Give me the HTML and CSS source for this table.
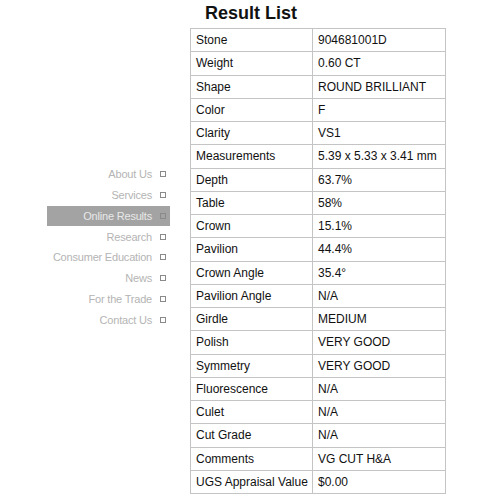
FILE: index.html
```html
<!DOCTYPE html>
<html>
<head>
<meta charset="utf-8">
<link rel="stylesheet" href="styles.css">
</head>
<body>
<div class="page">
  <nav class="side">
    <ul class="menu">
      <li class="item"><span>About Us</span><i class="box"></i></li>
      <li class="item"><span>Services</span><i class="box"></i></li>
      <li class="item active"><span>Online Results</span><i class="box"></i></li>
      <li class="item"><span>Research</span><i class="box"></i></li>
      <li class="item"><span>Consumer Education</span><i class="box"></i></li>
      <li class="item"><span>News</span><i class="box"></i></li>
      <li class="item"><span>For the Trade</span><i class="box"></i></li>
      <li class="item"><span>Contact Us</span><i class="box"></i></li>
    </ul>
  </nav>
  <main class="main">
    <h1 class="title">Result List</h1>
    <table class="results">
      <tr><td>Stone</td><td>904681001D</td></tr>
      <tr><td>Weight</td><td>0.60 CT</td></tr>
      <tr><td>Shape</td><td>ROUND BRILLIANT</td></tr>
      <tr><td>Color</td><td>F</td></tr>
      <tr><td>Clarity</td><td>VS1</td></tr>
      <tr><td>Measurements</td><td>5.39 x 5.33 x 3.41 mm</td></tr>
      <tr><td>Depth</td><td>63.7%</td></tr>
      <tr><td>Table</td><td>58%</td></tr>
      <tr><td>Crown</td><td>15.1%</td></tr>
      <tr><td>Pavilion</td><td>44.4%</td></tr>
      <tr><td>Crown Angle</td><td>35.4°</td></tr>
      <tr><td>Pavilion Angle</td><td>N/A</td></tr>
      <tr><td>Girdle</td><td>MEDIUM</td></tr>
      <tr><td>Polish</td><td>VERY GOOD</td></tr>
      <tr><td>Symmetry</td><td>VERY GOOD</td></tr>
      <tr><td>Fluorescence</td><td>N/A</td></tr>
      <tr><td>Culet</td><td>N/A</td></tr>
      <tr><td>Cut Grade</td><td>N/A</td></tr>
      <tr><td>Comments</td><td>VG CUT H&amp;A</td></tr>
      <tr><td>UGS Appraisal Value</td><td>$0.00</td></tr>
    </table>
  </main>
</div>
</body>
</html>
```
FILE: styles.css
```css
html, body {
  margin: 0;
  padding: 0;
  background: #fff;
}
.page {
  display: flex;
  align-items: flex-start;
  font-family: "Liberation Sans", Arial, sans-serif;
}
.side {
  width: 143px;
  padding-left: 47px;
  padding-top: 164px;
}
.menu {
  list-style: none;
  margin: 0;
  padding: 0;
  width: 123px;
}
.item {
  display: flex;
  justify-content: flex-end;
  align-items: center;
  gap: 8px;
  height: 20.75px;
  padding-right: 4px;
  font-size: 11px;
  color: #b4b4b4;
  letter-spacing: -0.2px;
}
.item.active {
  background: #a3a3a3;
  color: #e8e8e8;
}
.box {
  display: block;
  width: 4px;
  height: 4px;
  border: 1px solid #8a8a8a;
}
.main {
  display: flex;
  flex-direction: column;
}
.title {
  margin: 2px 0 4px 15px;
  font-size: 18px;
  line-height: 22px;
  font-weight: bold;
  color: #111;
}
.results {
  border-collapse: collapse;
  font-size: 12px;
  color: #111;
}
.results td {
  border: 1px solid #c4c4c4;
  height: 23.25px;
  padding: 0 4px 0 5px;
  vertical-align: middle;
  box-sizing: border-box;
}
.results td:first-child {
  width: 122px;
}
.results td:last-child {
  width: 133px;
}
```
